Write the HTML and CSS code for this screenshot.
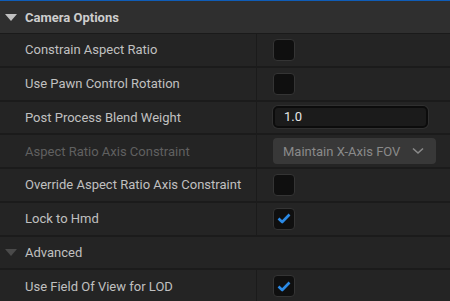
FILE: index.html
```html
<!DOCTYPE html>
<html lang="en">
<head>
    <meta charset="UTF-8">
    <title>Camera Options</title>
    <link rel="stylesheet" href="styles.css">
</head>
<body>
    <div class="panel">
        <div class="category">
            <span class="arrow"></span>
            <span class="category-title">Camera Options</span>
        </div>

        <div class="row">
            <div class="name">Constrain Aspect Ratio</div>
            <div class="value"><span class="check"></span></div>
        </div>
        <div class="row">
            <div class="name">Use Pawn Control Rotation</div>
            <div class="value"><span class="check"></span></div>
        </div>
        <div class="row">
            <div class="name">Post Process Blend Weight</div>
            <div class="value"><div class="num-input">1.0</div></div>
        </div>
        <div class="row">
            <div class="name disabled">Aspect Ratio Axis Constraint</div>
            <div class="value">
                <div class="combo">
                    <span>Maintain X-Axis FOV</span>
                    <svg width="12" height="8" viewBox="0 0 12 8"><path d="M1 1.5 L6 6 L11 1.5" fill="none" stroke="#8a8a8a" stroke-width="1.6"/></svg>
                </div>
            </div>
        </div>
        <div class="row">
            <div class="name">Override Aspect Ratio Axis Constraint</div>
            <div class="value"><span class="check"></span></div>
        </div>
        <div class="row">
            <div class="name">Lock to Hmd</div>
            <div class="value">
                <span class="check">
                    <svg width="14" height="11" viewBox="0 0 14 11"><path d="M1.5 5.5 L5.2 9 L12.5 1.5" fill="none" stroke="#2b8ae6" stroke-width="2.6" stroke-linejoin="round"/></svg>
                </span>
            </div>
        </div>

        <div class="row sub">
            <span class="arrow dim"></span>
            <span class="sub-title">Advanced</span>
        </div>

        <div class="row">
            <div class="name">Use Field Of View for LOD</div>
            <div class="value">
                <span class="check">
                    <svg width="14" height="11" viewBox="0 0 14 11"><path d="M1.5 5.5 L5.2 9 L12.5 1.5" fill="none" stroke="#2b8ae6" stroke-width="2.6" stroke-linejoin="round"/></svg>
                </span>
            </div>
        </div>
    </div>
</body>
</html>
```

FILE: styles.css
```css
body {
    margin: 0;
    background-color: #242424;
    font-family: Roboto, "Liberation Sans", Arial, sans-serif;
    font-size: 13px;
    color: #c0c0c0;
    overflow: hidden;
}
.panel {
    border-top: 1px solid #0f5db8;
}
.category {
    display: flex;
    align-items: center;
    height: 32px;
    background-color: #2f2f2f;
    border-bottom: 1px solid #1a1a1a;
}
.arrow {
    width: 0;
    height: 0;
    margin: 0 8px 0 5px;
    border-left: 6px solid transparent;
    border-right: 6px solid transparent;
    border-top: 7px solid #c0c0c0;
}
.arrow.dim {
    border-top-color: #4a4a4a;
}
.category-title {
    font-weight: bold;
    color: #cdcdcd;
}
.row {
    display: flex;
    align-items: stretch;
    height: 31.75px;
    background-color: #242424;
    border-bottom: 2px solid #1b1b1b;
}
.row.sub {
    align-items: center;
}
.sub-title {
    color: #c0c0c0;
}
.name {
    width: 231px;
    padding-left: 25px;
    border-right: 1px solid #1b1b1b;
    display: flex;
    align-items: center;
    white-space: nowrap;
    overflow: hidden;
}
.name.disabled {
    color: #606060;
}
.value {
    flex: 1;
    display: flex;
    align-items: center;
    padding-left: 16px;
}
.check {
    width: 20px;
    height: 20px;
    border: 1px solid #343434;
    border-radius: 4px;
    background-color: #0f0f0f;
    display: flex;
    align-items: center;
    justify-content: center;
}
.num-input {
    width: 142px;
    height: 18px;
    line-height: 18px;
    padding-left: 9px;
    border: 2px solid #0c0c0c;
    border-radius: 5px;
    background-color: #1b1b1b;
    box-shadow: 0 0 0 1px #303030;
    color: #e6e6e6;
}
.combo {
    width: 163px;
    height: 26px;
    box-sizing: border-box;
    padding: 0 12px 0 10px;
    border-radius: 4px;
    background-color: #383838;
    color: #8a8a8a;
    display: flex;
    align-items: center;
    justify-content: space-between;
}
```
